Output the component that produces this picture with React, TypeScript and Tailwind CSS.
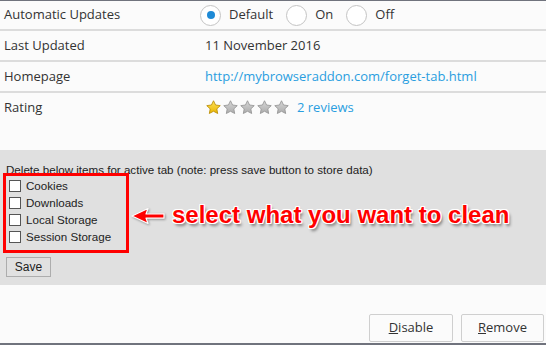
import React from "react";

function Star({ gold }: { gold?: boolean }) {
  const id = gold ? "sg" : "sx";
  return (
    <svg width="15" height="15" viewBox="0 0 24 24" className="shrink-0">
      <defs>
        <linearGradient id={id} x1="0" y1="0" x2="0" y2="1">
          <stop offset="0" stopColor={gold ? "#ffe35a" : "#d8d8d8"} />
          <stop offset="1" stopColor={gold ? "#e8b400" : "#ababab"} />
        </linearGradient>
      </defs>
      <path
        d="M12 1.2l3.3 6.8 7.5 1-5.5 5.2 1.4 7.4L12 18l-6.7 3.6 1.4-7.4-5.5-5.2 7.5-1z"
        fill={`url(#${id})`}
        stroke={gold ? "#b88a00" : "#939393"}
        strokeWidth="1.3"
        strokeLinejoin="round"
      />
    </svg>
  );
}

function Radio({ checked, label }: { checked?: boolean; label: string }) {
  return (
    <div className="flex items-center">
      <div className="w-[21px] h-[21px] rounded-full border border-[#c4c4c4] bg-white flex items-center justify-center">
        {checked && <div className="w-[8px] h-[8px] rounded-full bg-[#1e8ad6]" />}
      </div>
      <span className="ml-[8px] mr-[13px]">{label}</span>
    </div>
  );
}

function Row({ label, children, h }: { label: string; children: React.ReactNode; h: string }) {
  return (
    <div className={`flex items-center border-b-2 border-[#dcdcdc] ${h}`}>
      <div className="w-[196px] pl-[4px] text-[#333]">{label}</div>
      <div className="flex items-center">{children}</div>
    </div>
  );
}

function Check({ label }: { label: string }) {
  return (
    <div className="flex items-center h-[17px] pl-[3px]">
      <div className="w-[12px] h-[12px] border border-[#555] bg-white" />
      <span className="ml-[5px]">{label}</span>
    </div>
  );
}

export default function App() {
  return (
    <div className="w-[546px] h-[345px] bg-[#fbfbfb] flex flex-col relative overflow-hidden font-['Open_Sans',sans-serif] text-[13px] text-[#333]">
      <div className="h-[1px] bg-[#70737d]" />
      <Row label="Automatic Updates" h="h-[30px]">
        <div className="flex items-center ml-[4px]">
          <Radio checked label="Default" />
          <Radio label="On" />
          <Radio label="Off" />
        </div>
      </Row>
      <Row label="Last Updated" h="h-[31px]">
        <span className="ml-[9px]">11 November 2016</span>
      </Row>
      <Row label="Homepage" h="h-[31px]">
        <span className="ml-[9px] text-[#2a9ee0]">http://mybrowseraddon.com/forget-tab.html</span>
      </Row>
      <div className="flex items-center h-[29px]">
        <div className="w-[196px] pl-[4px]">Rating</div>
        <div className="flex items-center ml-[10px] gap-[2px]">
          <Star gold />
          <Star />
          <Star />
          <Star />
          <Star />
          <span className="ml-[6px] text-[#2a9ee0]">2 reviews</span>
        </div>
      </div>
      <div className="h-[28px]" />
      <div className="bg-[#e0e0e0] h-[135px] pt-[12px] px-[6px] font-['Liberation_Sans',Arial,sans-serif] text-[11.6px] text-[#222]">
        <div className="leading-[15px]">Delete below items for active tab (note: press save button to store data)</div>
        <Check label="Cookies" />
        <Check label="Downloads" />
        <Check label="Local Storage" />
        <Check label="Session Storage" />
        <button className="mt-[12px] w-[45px] h-[20px] bg-[#e1e1e1] border border-[#adadad] text-[12px] text-[#222] flex items-center justify-center">
          Save
        </button>
      </div>
      <div className="flex-1 flex items-end justify-end gap-[8px] pr-[2px] pb-[1px]">
        <button className="w-[84px] h-[28px] bg-[#fbfbfb] border border-[#cfcfcf] rounded-[2px] text-[#333]">
          <span className="underline">D</span>isable
        </button>
        <button className="w-[83px] h-[28px] bg-[#fbfbfb] border border-[#cfcfcf] rounded-[2px] text-[#333]">
          <span className="underline">R</span>emove
        </button>
      </div>
      <div className="h-[2px] bg-[#70737d]" />

      {/* annotation overlays */}
      <div className="absolute left-[3px] top-[173px] w-[126px] h-[80px] border-[3px] border-[#ff0000]" />
      <svg className="absolute left-[129px] top-[204px]" width="40" height="24" viewBox="0 0 40 24" style={{ filter: "drop-shadow(1px 1px 1px rgba(0,0,0,0.35))" }}>
        <path d="M3 12 L19 4.5 L17 10 L35 9.8 L35 14.2 L17 14 L19 19.5 Z" fill="#ff0000" stroke="#ffffff" strokeWidth="1.2" strokeLinejoin="round" />
      </svg>
      <div className="absolute left-[172px] top-[200px] font-['Liberation_Sans',Arial,sans-serif] font-bold text-[24px] leading-[30px] text-[#ff0000] whitespace-nowrap [text-shadow:-1px_-1px_0_#fff,1px_-1px_0_#fff,-1px_1px_0_#fff,1px_1px_0_#fff,0_-1px_0_#fff,0_1px_0_#fff,-1px_0_0_#fff,1px_0_0_#fff,2px_3px_3px_rgba(0,0,0,0.45)]">
        select what you want to clean
      </div>
    </div>
  );
}
